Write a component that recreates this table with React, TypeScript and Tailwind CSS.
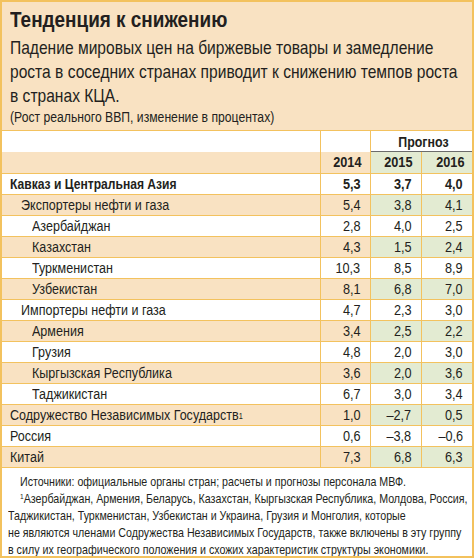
import React from "react";

type Row = {
  name: string;
  level: 0 | 1 | 2;
  v: [string, string, string];
  bold?: boolean;
  sup?: boolean;
};

const rows: Row[] = [
  { name: "Кавказ и Центральная Азия", level: 0, v: ["5,3", "3,7", "4,0"], bold: true },
  { name: "Экспортеры нефти и газа", level: 1, v: ["5,4", "3,8", "4,1"] },
  { name: "Азербайджан", level: 2, v: ["2,8", "4,0", "2,5"] },
  { name: "Казахстан", level: 2, v: ["4,3", "1,5", "2,4"] },
  { name: "Туркменистан", level: 2, v: ["10,3", "8,5", "8,9"] },
  { name: "Узбекистан", level: 2, v: ["8,1", "6,8", "7,0"] },
  { name: "Импортеры нефти и газа", level: 1, v: ["4,7", "2,3", "3,0"] },
  { name: "Армения", level: 2, v: ["3,4", "2,5", "2,2"] },
  { name: "Грузия", level: 2, v: ["4,8", "2,0", "3,0"] },
  { name: "Кыргызская Республика", level: 2, v: ["3,6", "2,0", "3,6"] },
  { name: "Таджикистан", level: 2, v: ["6,7", "3,0", "3,4"] },
  { name: "Содружество Независимых Государств", level: 0, v: ["1,0", "–2,7", "0,5"], sup: true },
  { name: "Россия", level: 0, v: ["0,6", "–3,8", "–0,6"] },
  { name: "Китай", level: 0, v: ["7,3", "6,8", "6,3"] },
];

const indent = ["pl-2", "pl-[19px]", "pl-[30px]"];

// narrow face: Liberation Sans squeezed to Arial Narrow proportions
function L({ children, className = "scale-x-[0.82]" }: { children: React.ReactNode; className?: string }) {
  return <span className={`inline-block whitespace-nowrap origin-left ${className}`}>{children}</span>;
}
function R({ children }: { children: React.ReactNode }) {
  return <span className="inline-block whitespace-nowrap origin-right scale-x-[0.82]">{children}</span>;
}

export default function App() {
  return (
    <div className="w-[474px] h-[558px] overflow-hidden border-2 border-[#f3c25e] bg-[#f9e2c2] text-[#231f20] font-['Liberation_Sans',Arial,sans-serif]">
      <div className="px-2 pt-[4px] h-[128px]">
        <div className="text-[22px] font-bold leading-[28px]">
          <L className="scale-x-[0.86]">Тенденция к снижению</L>
        </div>
        <div className="text-[19px] leading-[24px] mt-[2px]">
          <div><L>Падение мировых цен на биржевые товары и замедление</L></div>
          <div><L>роста в соседних странах приводит к снижению темпов роста</L></div>
          <div><L>в странах КЦА.</L></div>
        </div>
        <div className="text-[14px] leading-[18px]">
          <L className="scale-x-[0.87]">(Рост реального ВВП, изменение в процентах)</L>
        </div>
      </div>
      <table className="w-full border-collapse text-[15.5px] leading-[20px]">
        <colgroup>
          <col className="w-[318px]" />
          <col className="w-[50px]" />
          <col className="w-[51px]" />
          <col className="w-[51px]" />
        </colgroup>
        <tbody>
          <tr className="h-[21px] bg-white">
            <td className="border-t border-[#f3c25e]" />
            <td className="border-t border-x border-[#f3c25e]" />
            <td colSpan={2} className="border-t border-[#f3c25e] p-0 align-bottom">
              <div className="flex justify-center pl-1 font-bold border-b-[1.5px] border-[#6b6b6b] leading-[19px]">
                <span className="inline-block whitespace-nowrap scale-x-[0.8]">Прогноз</span>
              </div>
            </td>
          </tr>
          <tr className="h-[22px] bg-[#f9e2c2] font-bold">
            <td className="border-b border-[#f3c25e]" />
            <td className="border-x border-b border-[#f3c25e] text-right pr-[8px]"><R>2014</R></td>
            <td className="bg-[#e3ebd2] border-r border-b border-[#f3c25e] text-right pr-[8px]"><R>2015</R></td>
            <td className="bg-[#e3ebd2] border-b border-[#f3c25e] text-right pr-[8px]"><R>2016</R></td>
          </tr>
          {rows.map((r, i) => {
            const shaded = i % 2 === 1;
            return (
              <tr key={r.name} className={`h-[21px] ${shaded ? "bg-[#f9e2c2]" : "bg-white"} ${r.bold ? "font-bold" : ""}`}>
                <td className={`${indent[r.level]} border-b border-[#f3c25e]`}>
                  <L className={r.bold ? "scale-x-[0.78]" : "scale-x-[0.81]"}>
                    {r.name}
                    {r.sup && <sup className="text-[9px] relative -top-[1px]">1</sup>}
                  </L>
                </td>
                <td className="border-x border-b border-[#f3c25e] text-right pr-[9px]"><R>{r.v[0]}</R></td>
                <td className={`${shaded ? "bg-[#e3ebd2]" : ""} border-r border-b border-[#f3c25e] text-right pr-[9px]`}><R>{r.v[1]}</R></td>
                <td className={`${shaded ? "bg-[#e3ebd2]" : ""} border-b border-[#f3c25e] text-right pr-[9px]`}><R>{r.v[2]}</R></td>
              </tr>
            );
          })}
        </tbody>
      </table>
      <div className="bg-white h-full px-[6px] pt-[5px] text-[13px] leading-[17px]">
        <div className="pl-3"><L>Источники: официальные органы стран; расчеты и прогнозы персонала МВФ.</L></div>
        <div className="pl-3">
          <L>
            <sup className="text-[8px]">1</sup>Азербайджан, Армения, Беларусь, Казахстан, Кыргызская Республика, Молдова, Россия,
          </L>
        </div>
        <div><L>Таджикистан, Туркменистан, Узбекистан и Украина, Грузия и Монголия, которые</L></div>
        <div><L>не являются членами Содружества Независимых Государств, также включены в эту группу</L></div>
        <div><L>в силу их географического положения и схожих характеристик структуры экономики.</L></div>
      </div>
    </div>
  );
}
